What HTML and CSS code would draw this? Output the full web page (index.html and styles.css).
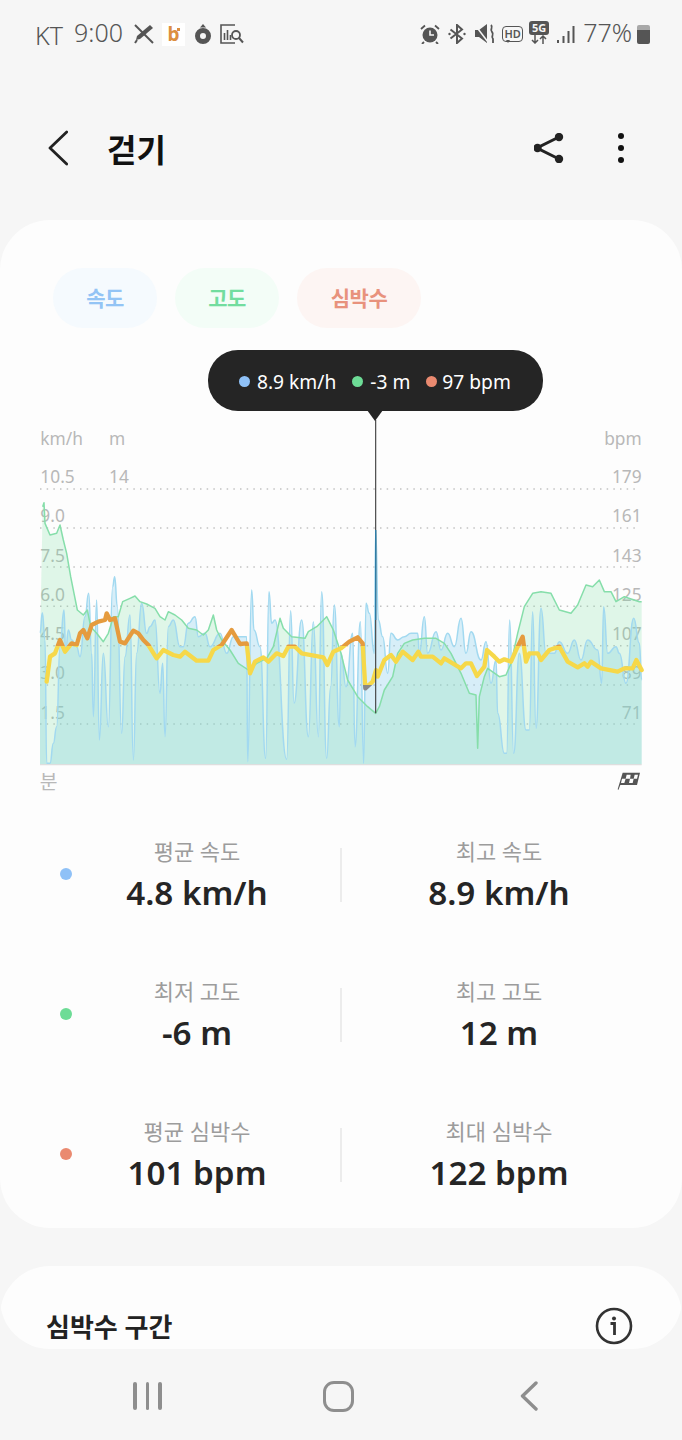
FILE: index.html
```html
<!DOCTYPE html>
<html lang="ko">
<head>
  <meta charset="UTF-8" />
  <meta name="viewport" content="width=device-width, initial-scale=1.0"/>
  <title>걷기</title>
  <link rel="stylesheet" href="styles.css">
</head>
<body>
  <div class="pantalla">
    <div class="status">
      <span class="carrier">KT</span>
      <span class="hora">9:00</span>
      <svg class="ico-pen" viewBox="0 0 20 20" width="20" height="20">
        <path d="M1 1l18 18" stroke="#555" stroke-width="2" fill="none"/>
        <path d="M16 1l3 3L6 15l-4 1 1-4z" fill="#555"/>
        <path d="M1 19l2-3" stroke="#555" stroke-width="2"/>
      </svg>
      <span class="logo-b">b<i></i></span>
      <svg class="ico-ring" viewBox="0 0 16 20" width="16" height="20">
        <path d="M5 3.500L8 0l3 3.500z" fill="#555"/>
        <circle cx="8" cy="12" r="5.500" fill="none" stroke="#555" stroke-width="5"/>
      </svg>
      <svg class="ico-stat" viewBox="0 0 24 20" width="24" height="20">
        <path d="M15 1H1v18h14" fill="none" stroke="#555" stroke-width="1.600"/>
        <path d="M4.500 16V9M7.500 16V6M10.500 16v-5" stroke="#555" stroke-width="1.600"/>
        <circle cx="16" cy="11" r="4" fill="#f6f6f6" stroke="#555" stroke-width="1.800"/>
        <path d="M19 14l4 4.500" stroke="#555" stroke-width="2"/>
      </svg>
      <span class="espacio"></span>
      <svg class="ico-alarma" viewBox="0 0 20 20" width="20" height="20">
        <circle cx="10" cy="11" r="7.500" fill="#555"/>
        <path d="M10 6.500V11h4" stroke="#f6f6f6" stroke-width="1.600" fill="none"/>
        <path d="M1 5l4-3.500M19 5l-4-3.500M4 18l-2 2M16 18l2 2" stroke="#555" stroke-width="1.800"/>
      </svg>
      <svg class="ico-bt" viewBox="0 0 18 20" width="18" height="20">
        <path d="M2.500 5.500L14 14.500 9 19V1l5 4.500L2.500 14.500" fill="none" stroke="#555" stroke-width="2"/>
        <circle cx="1.500" cy="10" r="1.200" fill="#555"/><circle cx="16.500" cy="10" r="1.200" fill="#555"/>
      </svg>
      <svg class="ico-mute" viewBox="0 0 20 20" width="20" height="20">
        <path d="M0 6h4l8-6v19l-8-6H0z" fill="#555"/>
        <path d="M0 1l13 17" stroke="#f6f6f6" stroke-width="1.500"/>
        <path d="M16 1c3 3-2 4 1 7s-2 4 1 7l0 4" stroke="#555" stroke-width="1.800" fill="none"/>
      </svg>
      <span class="hd">HD</span>
      <span class="red5g"><b>5G</b><svg viewBox="0 0 16 9" width="16" height="9"><path d="M4 0v8M1 5l3 3 3-3M12 9V1M9 4l3-3 3 3" stroke="#555" stroke-width="1.500" fill="none"/></svg></span>
      <svg class="ico-signal" viewBox="0 0 18 18" width="18" height="18">
        <path d="M1 15v3M6.500 11v7M11.500 6v12M16.500 1v17" stroke="#555" stroke-width="2"/>
      </svg>
      <span class="bateria-txt">77%</span>
      <span class="bateria"></span>
    </div>

    <div class="barra">
      <svg class="volver" viewBox="0 0 20 36" width="20" height="36">
        <path d="M18.700 2L2 18l16.700 16" fill="none" stroke="#222" stroke-width="2.800" stroke-linecap="round" stroke-linejoin="round"/>
      </svg>
      <h1>걷기</h1>
      <svg class="compartir" viewBox="0 0 30 30" width="30" height="30">
        <path d="M25 4L3 15l22 11" fill="none" stroke="#222" stroke-width="3"/>
        <circle cx="25" cy="4" r="4.200" fill="#222"/><circle cx="3.500" cy="15" r="4.200" fill="#222"/><circle cx="25" cy="26" r="4.200" fill="#222"/>
      </svg>
      <div class="puntos"><i></i><i></i><i></i></div>
    </div>

    <div class="tarjeta principal">
      <div class="chips">
        <span class="chip velocidad">속도</span>
        <span class="chip altitud">고도</span>
        <span class="chip pulso">심박수</span>
      </div>

      <div class="globo">
        <span class="punto azul"></span><span class="dato d1">8.9 km/h</span>
        <span class="punto verde"></span><span class="dato d2">-3 m</span>
        <span class="punto rojo"></span><span class="dato d3">97 bpm</span>
      </div>

      <svg class="grafica" viewBox="0 0 2046 1140" width="682" height="380">
        <defs>
          <linearGradient id="zonas" gradientUnits="userSpaceOnUse" x1="0" y1="0" x2="0" y2="1140">
            <stop offset="0.595" stop-color="#e59b3e"/>
            <stop offset="0.595" stop-color="#f6d849"/>
            <stop offset="0.697" stop-color="#f6d849"/>
            <stop offset="0.697" stop-color="#888888"/>
          </linearGradient>
        </defs>

        <g class="rejilla">
          <path d="M120 207H1912M120 324H1912M120 441H1912M120 559H1912M120 677H1912M120 795H1912M120 912H1912"/>
        </g>
        <g class="eje">
          <text x="121" y="75">km/h</text>
          <text x="327" y="75">m</text>
          <text x="121" y="188">10.5</text>
          <text x="327" y="188">14</text>
          <text x="121" y="305">9.0</text>
          <text x="121" y="425">7.5</text>
          <text x="121" y="542">6.0</text>
          <text x="121" y="660">4.5</text>
          <text x="121" y="778">3.0</text>
          <text x="121" y="897">1.5</text>
          <text class="fin" x="1925" y="75">bpm</text>
          <text class="fin" x="1925" y="188">179</text>
          <text class="fin" x="1925" y="305">161</text>
          <text class="fin" x="1925" y="425">143</text>
          <text class="fin" x="1925" y="542">125</text>
          <text class="fin" x="1925" y="660">107</text>
          <text class="fin" x="1925" y="778">89</text>
          <text class="fin" x="1925" y="897">71</text>
          <text class="unidad" x="119" y="1107">분</text>
        </g>

        <!-- velocidad: chart.js -->
        <path id="areaVel" class="area-v"/>
        <!-- altitud -->
        <path class="area-a" d="M120 1033V680L128 260 132 248 135 310 150 345 170 340 180 315 190 360 200 400 212 470 222 520 232 570 250 585 262 570 272 620 290 640 310 665 325 640 340 590 355 590 368 545 390 535 405 528 420 545 440 552 465 565 480 590 495 600 505 575 525 585 545 600 565 625 590 630 610 645 625 630 640 585 650 630 665 660 690 690 715 730 745 750 770 730 800 715 820 680 840 595 850 625 875 650 915 655 925 635 950 620 980 590 1000 630 1023 700 1043 780 1073 830 1103 860 1127 880 1138 860 1153 810 1178 770 1193 700 1213 670 1238 660 1273 655 1308 655 1333 670 1353 700 1383 760 1408 820 1428 825 1433 985 1438 830 1453 770 1463 745 1498 770 1518 765 1533 730 1553 640 1573 560 1598 520 1623 515 1653 520 1678 570 1713 580 1733 555 1758 495 1778 500 1798 480 1813 515 1833 515 1848 545 1873 530 1918 545 1925 545V1033Z"/>
        <path id="lineaVel" class="linea-v"/>
        <path class="linea-a" d="M128 260L132 248 135 310 150 345 170 340 180 315 190 360 200 400 212 470 222 520 232 570 250 585 262 570 272 620 290 640 310 665 325 640 340 590 355 590 368 545 390 535 405 528 420 545 440 552 465 565 480 590 495 600 505 575 525 585 545 600 565 625 590 630 610 645 625 630 640 585 650 630 665 660 690 690 715 730 745 750 770 730 800 715 820 680 840 595 850 625 875 650 915 655 925 635 950 620 980 590 1000 630 1023 700 1043 780 1073 830 1103 860 1127 880 1138 860 1153 810 1178 770 1193 700 1213 670 1238 660 1273 655 1308 655 1333 670 1353 700 1383 760 1408 820 1428 825 1433 985 1438 830 1453 770 1463 745 1498 770 1518 765 1533 730 1553 640 1573 560 1598 520 1623 515 1653 520 1678 570 1713 580 1733 555 1758 495 1778 500 1798 480 1813 515 1833 515 1848 545 1873 530 1918 545 1925 545"/>
        <path class="base" d="M120 1034H1925"/>
        <!-- pulso -->
        <path class="linea-p" stroke="url(#zonas)" d="M140 785L150 710 165 700 180 660 195 695 215 670 230 675 240 640 250 630 262 655 275 615 295 605 315 600 320 580 330 600 345 595 360 665 375 670 400 632 415 640 430 660 445 675 470 715 490 690 520 705 540 710 555 695 590 722 625 722 640 690 665 675 695 630 720 672 740 670 750 760 765 725 790 712 805 725 830 700 850 708 865 680 885 680 905 700 970 712 982 735 1000 695 1023 685 1048 665 1073 652 1088 670 1096 805 1118 785 1128 750 1133 770 1153 720 1173 705 1188 725 1208 695 1238 720 1255 695 1263 710 1298 710 1323 730 1333 715 1358 730 1383 745 1398 730 1413 730 1431 768 1453 740 1461 690 1483 710 1498 725 1513 718 1533 725 1553 680 1568 650 1578 725 1588 700 1613 700 1623 720 1648 690 1678 680 1703 725 1733 742 1753 730 1763 740 1773 725 1803 745 1853 755 1873 745 1898 745 1909 720 1925 750"/>
        <path class="cursor" d="M1127 0V880"/>
        <path class="cursor-v" d="M1127 330V600"/>

        <path class="bandera" d="M1868 1058H1920L1911 1095H1861L1855 1110 1853 1108Z"/>
        <path class="cuadros" d="M1880 1064H1892L1890 1076H1877ZM1904 1064H1914L1911 1076H1901ZM1890 1076H1901L1898 1089H1887ZM1866 1076H1877L1873 1089H1863Z"/>
      </svg>

      <div class="fila primera">
        <span class="punto grande azul"></span>
        <div class="dato-col"><span class="etiqueta">평균 속도</span><strong>4.8 km/h</strong></div>
        <span class="divisor"></span>
        <div class="dato-col der"><span class="etiqueta">최고 속도</span><strong>8.9 km/h</strong></div>
      </div>
      <div class="fila">
        <span class="punto grande verde"></span>
        <div class="dato-col"><span class="etiqueta">최저 고도</span><strong>-6 m</strong></div>
        <span class="divisor"></span>
        <div class="dato-col der"><span class="etiqueta">최고 고도</span><strong>12 m</strong></div>
      </div>
      <div class="fila">
        <span class="punto grande rojo"></span>
        <div class="dato-col"><span class="etiqueta">평균 심박수</span><strong>101 bpm</strong></div>
        <span class="divisor"></span>
        <div class="dato-col der"><span class="etiqueta">최대 심박수</span><strong>122 bpm</strong></div>
      </div>
    </div>

    <div class="tarjeta zonas">
      <h2>심박수 구간</h2>
      <svg viewBox="0 0 38 38" width="38" height="38">
        <circle cx="19" cy="19" r="17" fill="none" stroke="#333" stroke-width="2.600"/>
        <circle cx="19" cy="11.500" r="2" fill="#333"/>
        <path d="M15.500 16.500H19.500V28" fill="none" stroke="#333" stroke-width="2.800"/>
      </svg>
    </div>
  </div>

  <div class="nav">
    <div class="recientes"><i></i><i></i><i></i></div>
    <div class="inicio"></div>
    <svg class="atras" viewBox="0 0 18 30" width="18" height="30">
      <path d="M16 2L2.500 15 16 28" fill="none" stroke="#8e8e8e" stroke-width="3.400" stroke-linecap="round" stroke-linejoin="round"/>
    </svg>
  </div>

  <script src="chart.js"></script>
</body>
</html>
```

FILE: styles.css
```css
* {
  box-sizing: border-box;
}
html, body {
  margin: 0;
  padding: 0;
}
body {
  width: 682px;
  height: 1440px;
  overflow: hidden;
  background: #f6f6f6;
  font-family: 'Noto Sans', 'Noto Sans CJK KR', sans-serif;
  color: #252525;
}
.pantalla {
  height: 1349px;
  overflow: hidden;
  border-radius: 0 0 50px 50px;
}

/* barra de estado */
.status {
  display: flex;
  align-items: center;
  height: 66px;
  padding: 2px 32px 0 35px;
  color: #555;
  font-size: 24px;
  font-weight: 300;
}
.status svg {
  flex: none;
}
.carrier {
  margin-top: 1px;
  margin-right: 11px;
  font-size: 25px;
}
.hora {
  margin-top: -4px;
  margin-right: 11px;
  font-size: 25px;
}
.logo-b {
  position: relative;
  width: 23px;
  height: 23px;
  margin-left: 8px;
  margin-right: 10px;
  background: #fff;
  color: #dc8f3f;
  font-size: 19px;
  font-weight: 700;
  line-height: 22px;
  text-align: center;
}
.logo-b i {
  position: absolute;
  top: 5px;
  right: 5px;
  width: 3px;
  height: 3px;
  background: #dc8f3f;
}
.ico-stat {
  margin-left: 9px;
}
.espacio {
  flex: 1;
}
.ico-alarma {
  margin-right: 1px;
}
.ico-bt {
  margin-left: 7px;
}
.ico-mute {
  margin-left: 9px;
}
.hd {
  position: relative;
  width: 21px;
  height: 16px;
  margin-left: 7px;
  border: 1.500px solid #555;
  border-radius: 4px;
  font-size: 11px;
  font-weight: 600;
  line-height: 13px;
  text-align: center;
}
.hd::after {
  content: '';
  position: absolute;
  top: 13px;
  left: 3px;
  border: 2px solid transparent;
  border-top: 3px solid #555;
  border-bottom: 0;
}
.red5g {
  display: flex;
  flex-direction: column;
  align-items: center;
  width: 20px;
  margin-left: 6px;
  margin-top: -3px;
}
.red5g b {
  width: 20px;
  height: 14px;
  background: #555;
  border-radius: 3px;
  color: #f6f6f6;
  font-size: 11px;
  font-weight: 700;
  line-height: 14px;
  text-align: center;
}
.ico-signal {
  margin-left: 8px;
}
.bateria-txt {
  margin-left: 8px;
  margin-top: -4px;
  font-size: 25px;
}
.bateria {
  width: 13px;
  height: 19px;
  margin-left: 5px;
  background: linear-gradient(#a8a8a8 5px, #555 5px);
  border-radius: 2px;
}

/* cabecera */
.barra {
  display: flex;
  align-items: center;
  height: 154px;
  padding: 10px 58px 0 48px;
}
h1 {
  flex: 1;
  margin: 0 0 0 39px;
  font-size: 32px;
  font-weight: 700;
  color: #111;
}
.compartir {
  margin-right: 54px;
}
.puntos {
  display: flex;
  flex-direction: column;
  gap: 6px;
}
.puntos i {
  width: 6px;
  height: 6px;
  background: #111;
  border-radius: 50%;
}

/* tarjetas */
.tarjeta {
  background: #fdfdfd;
  border-radius: 50px;
}
.principal {
  height: 1008px;
  padding-top: 48px;
}
.chips {
  display: flex;
  gap: 18px;
  padding-left: 53px;
}
.chip {
  width: 104px;
  height: 60px;
  border-radius: 30px;
  font-size: 21px;
  font-weight: 700;
  letter-spacing: -0.500px;
  line-height: 60px;
  text-align: center;
}
.velocidad {
  background: #f5fafe;
  color: #93c4f5;
}
.altitud {
  background: #f3fdf7;
  color: #72dd9f;
}
.chip.pulso {
  width: 124px;
  background: #fdf5f3;
  color: #e8927d;
}

/* globo de la gráfica */
.globo {
  position: relative;
  display: flex;
  align-items: center;
  width: 335px;
  height: 61px;
  margin: 22px 0 9px 208px;
  padding: 2px 0 0 31px;
  background: #252525;
  border-radius: 30px;
  color: #fff;
  font-size: 19.200px;
}
.globo::after {
  content: '';
  position: absolute;
  top: 60px;
  left: 159px;
  border: 8px solid transparent;
  border-top: 11px solid #252525;
  border-bottom: 0;
}
.dato {
  margin-left: 7px;
  white-space: nowrap;
}
.d1 {
  margin-right: 16px;
}
.d2 {
  margin-right: 16px;
}
.d3 {
  margin-left: 5px;
}
.punto {
  flex: none;
  width: 11px;
  height: 11px;
  border-radius: 50%;
}
.azul {
  background: #8fc1f7;
}
.verde {
  background: #6ddc96;
}
.rojo {
  background: #ea8a70;
}

/* gráfica */
.grafica {
  display: block;
}
.rejilla path {
  fill: none;
  stroke: #c2c2c2;
  stroke-width: 4.5;
  stroke-dasharray: 4.5 15.5;
}
.eje text {
  fill: #b8b8b8;
  font-size: 52px;
}
.eje .fin {
  text-anchor: end;
}
.eje .unidad {
  font-size: 58px;
}
.area-v {
  fill: rgba(130, 205, 240, 0.3);
}
.area-a {
  fill: rgba(120, 225, 160, 0.22);
}
.linea-v {
  fill: none;
  stroke: #a2d9f0;
  stroke-width: 4.5;
  stroke-linejoin: round;
}
.linea-a {
  fill: none;
  stroke: #86deaa;
  stroke-width: 4.5;
  stroke-linejoin: round;
}
.base {
  stroke: #dedede;
  stroke-width: 4;
}
.linea-p {
  fill: none;
  stroke-width: 13;
  stroke-linejoin: round;
  stroke-linecap: round;
}
.cursor {
  stroke: #444;
  stroke-width: 3.5;
}
.cursor-v {
  stroke: #2e7ca6;
  stroke-width: 4;
}
.bandera {
  fill: #555;
}
.cuadros {
  fill: #fdfdfd;
}

/* resumen */
.fila {
  display: flex;
  align-items: center;
  height: 140px;
  padding-left: 60px;
}
.fila.primera {
  margin-top: 4px;
}
.punto.grande {
  width: 12px;
  height: 12px;
}
.dato-col {
  display: flex;
  flex-direction: column;
  align-items: center;
  width: 250px;
  padding-top: 4px;
}
.dato-col.der {
  width: 314px;
}
.divisor {
  width: 2px;
  height: 54px;
  margin-left: 18px;
  margin-top: 2px;
  background: #ececec;
}
.etiqueta {
  color: #9c9c9c;
  font-size: 22px;
  line-height: 32px;
}
.dato-col strong {
  margin-top: 2px;
  font-size: 33.200px;
  font-weight: 600;
  line-height: 48px;
}

/* segunda tarjeta, cortada por la navegación */
.zonas {
  display: flex;
  align-items: flex-start;
  justify-content: space-between;
  height: 140px;
  margin-top: 38px;
  padding: 41px 49px 0 46px;
}
h2 {
  margin: 0;
  font-size: 26px;
  font-weight: 700;
  line-height: 40px;
  color: #222;
}

/* navegación */
.nav {
  position: relative;
  height: 91px;
}
.recientes {
  position: absolute;
  top: 33px;
  left: 133px;
  display: flex;
  gap: 9px;
}
.recientes i {
  width: 3.500px;
  height: 28px;
  background: #8e8e8e;
  border-radius: 2px;
}
.inicio {
  position: absolute;
  top: 32px;
  left: 323px;
  width: 31px;
  height: 31px;
  border: 3.500px solid #8e8e8e;
  border-radius: 11px;
}
.atras {
  position: absolute;
  top: 32px;
  left: 520px;
}
```

FILE: chart.js
```js
// velocidad: x, y en unidades del viewBox de la gráfica
const puntosVel = [
  120,640, 127,578, 135,660, 140,1030, 150,1030, 160,970, 170,920, 180,680, 192,570, 197,700, 205,630, 215,660, 230,680, 240,710,
  255,590, 266,520, 275,700, 280,890, 290,540, 298,960, 310,700, 325,920, 338,500, 344,470, 352,560, 365,940, 375,710, 390,585,
  400,1020, 410,700, 425,550, 440,640, 450,620, 465,600, 480,820, 488,730, 495,950, 505,620, 520,600, 540,680, 550,680, 565,610,
  585,590, 595,650, 615,640, 630,680, 660,640, 680,700, 700,650, 740,650, 743,1025, 755,510, 762,630, 780,680, 797,1015, 807,515,
  815,610, 825,600, 860,1018, 872,572, 882,850, 905,600, 925,950, 940,605, 955,950, 965,515, 980,1015, 992,800, 1003,555, 1018,920,
  1023,700, 1038,800, 1058,640, 1065,980, 1081,605, 1091,1030, 1098,550, 1108,580, 1123,700, 1127,330, 1135,600, 1148,650, 1163,760,
  1173,640, 1193,660, 1213,650, 1233,640, 1253,640, 1258,700, 1273,590, 1283,700, 1308,635, 1323,690, 1343,640, 1363,680, 1383,595,
  1398,700, 1413,635, 1443,720, 1458,665, 1473,790, 1488,720, 1493,880, 1513,1000, 1520,1000, 1529,600, 1541,1000, 1558,700, 1578,930,
  1588,930, 1598,575, 1608,925, 1623,565, 1638,700, 1663,700, 1678,665, 1703,700, 1723,660, 1743,720, 1763,660, 1793,690, 1805,790,
  1811,560, 1823,700, 1848,680, 1858,700, 1878,790, 1901,595, 1918,670, 1925,780
];

function trazoSuave(p) {
  let d = `M${p[0]} ${p[1]}`;
  for (let i = 2; i < p.length; i += 2) {
    const medio = (p[i - 2] + p[i]) / 2;
    d += `C${medio} ${p[i - 1]} ${medio} ${p[i + 1]} ${p[i]} ${p[i + 1]}`;
  }
  return d;
}

const trazo = trazoSuave(puntosVel);
document.getElementById('lineaVel').setAttribute('d', trazo);
document.getElementById('areaVel').setAttribute('d', trazo + 'V1033H120Z');
```
